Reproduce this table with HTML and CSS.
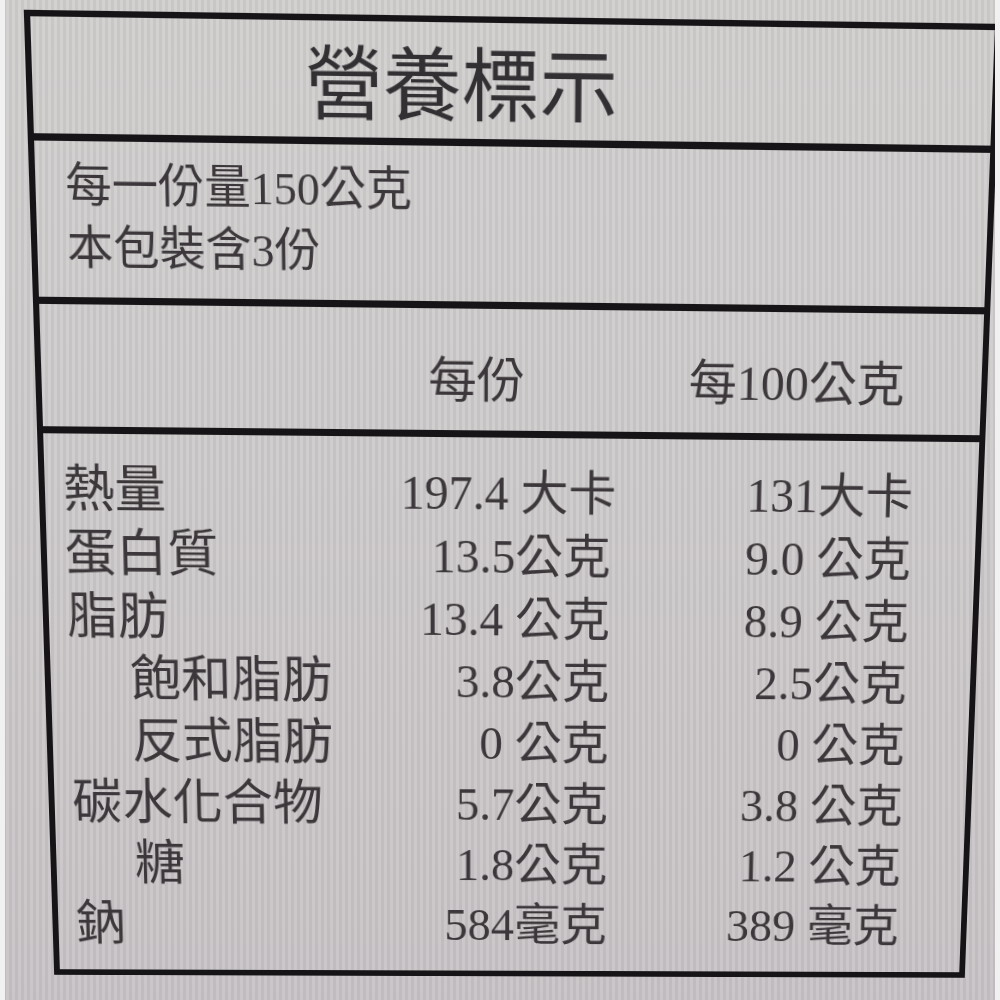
FILE: index.html
```html
<!DOCTYPE html>
<html lang="zh-Hant">
<head>
<meta charset="utf-8">
<title>營養標示</title>
<link rel="stylesheet" href="styles.css">
</head>
<body>
<div class="label">
  <div class="sec title">營養標示</div>
  <div class="sec serving">
    <div class="line">每一份量150公克</div>
    <div class="line">本包裝含3份</div>
  </div>
  <div class="sec head grid">
    <span></span>
    <span class="c2 hd2">每份</span>
    <span class="c3 hd3">每100公克</span>
  </div>
  <div class="sec data grid">
    <span class="c1">熱量</span><span class="c2">197.4 大卡</span><span class="c3">131大卡</span>
    <span class="c1">蛋白質</span><span class="c2">13.5公克</span><span class="c3">9.0 公克</span>
    <span class="c1">脂肪</span><span class="c2">13.4 公克</span><span class="c3">8.9 公克</span>
    <span class="c1 sub">飽和脂肪</span><span class="c2">3.8公克</span><span class="c3">2.5公克</span>
    <span class="c1 sub">反式脂肪</span><span class="c2">0 公克</span><span class="c3">0 公克</span>
    <span class="c1">碳水化合物</span><span class="c2">5.7公克</span><span class="c3">3.8 公克</span>
    <span class="c1 sub">糖</span><span class="c2">1.8公克</span><span class="c3">1.2 公克</span>
    <span class="c1">鈉</span><span class="c2">584毫克</span><span class="c3">389 毫克</span>
  </div>
</div>
</body>
</html>
```
FILE: styles.css
```css
html {
  background-color: #ccc9ca;
  background-image:
    repeating-linear-gradient(90deg, rgba(255,255,255,0.09) 0 3px, rgba(0,0,0,0.03) 3px 6px),
    linear-gradient(180deg, #cfcdcc 0%, #cbc8c9 50%, #c6c1c4 100%);
  overflow: hidden;
}
body {
  margin: 0;
  height: 1000px;
  overflow: hidden;
  font-family: "Liberation Serif", "Noto Sans CJK TC", serif;
  color: #3b373a;
}
body::before,
body::after {
  content: "";
  position: fixed;
  top: 0;
  bottom: 0;
  width: 5px;
  background: #f1f1f1;
  z-index: 2;
}
body::before {
  left: 0;
}
body::after {
  right: 0;
}
.label {
  box-sizing: border-box;
  width: 946px;
  height: 966px;
  margin: -3px 0 0 -3px;
  border: 6px solid #161416;
  transform-origin: 3px 3px;
  transform: matrix3d(1.045052, 0.0152202, 0, 0.000012097, 0.035607, 1.0732561, 0, 0.0000764381, 0, 0, 1, 0, 27, 13, 0, 1);
  filter: blur(0.7px);
}
.sec + .sec {
  border-top: 7px solid #161416;
}
.title {
  height: 110px;
  box-sizing: border-box;
  padding: 12px 0 0 263px;
  font-size: 76px;
  line-height: 98px;
  color: #333033;
}
.serving {
  height: 157px;
  box-sizing: border-box;
  padding: 13px 0 0 29px;
  font-size: 45px;
}
.serving .line {
  height: 60px;
  line-height: 60px;
}
.grid {
  display: grid;
  grid-template-columns: 336px 211px 304px;
  padding-left: 18px;
}
.head {
  height: 127px;
  box-sizing: border-box;
  padding-top: 40px;
  font-size: 48px;
  line-height: 62px;
}
.data {
  height: 560px;
  box-sizing: border-box;
  padding-top: 24px;
  font-size: 48px;
  line-height: 64px;
  grid-auto-rows: 64px;
}
.c1 {
  font-size: 51px;
  white-space: nowrap;
}
.c2, .c3 {
  text-align: right;
  white-space: nowrap;
}
.hd2 {
  padding-right: 87px;
}
.hd3 {
  padding-right: 12px;
}
.sub {
  padding-left: 62px;
}
```
